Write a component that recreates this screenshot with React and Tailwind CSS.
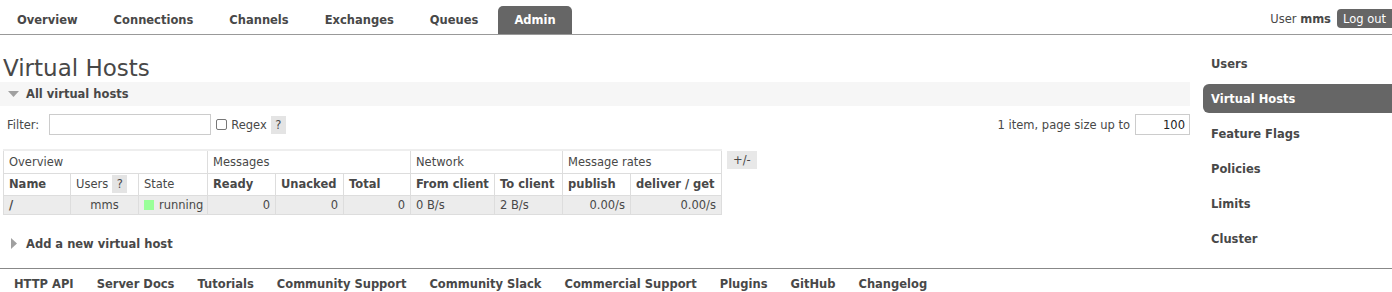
import React from "react";

const tabs = ["Overview", "Connections", "Channels", "Exchanges", "Queues", "Admin"];
const side = ["Users", "Virtual Hosts", "Feature Flags", "Policies", "Limits", "Cluster"];
const footer = [
  "HTTP API",
  "Server Docs",
  "Tutorials",
  "Community Support",
  "Community Slack",
  "Commercial Support",
  "Plugins",
  "GitHub",
  "Changelog",
];

const Help = () => (
  <span className="inline-flex items-center justify-center w-[15px] h-[18px] bg-[#e4e4e4] text-[#484848] ml-[4px]">?</span>
);

const App = () => {
  return (
    <div className="w-[1392px] h-[292px] overflow-hidden bg-white text-[#484848] text-[11.5px] leading-[14px] font-['DejaVu_Sans',Verdana,sans-serif]">
      {/* Top nav */}
      <div className="flex justify-between items-end h-[35px] border-b border-[#999]">
        <ul className="flex gap-[4px] pl-px">
          {tabs.map((t) => (
            <li
              key={t}
              className={`h-[28px] px-[16px] flex items-center font-bold ${
                t === "Admin" ? "bg-[#666] text-white rounded-t-[5px]" : ""
              }`}
            >
              {t}
            </li>
          ))}
        </ul>
        <div className="flex items-center self-start mt-[9px]">
          <span>
            User <b>mms</b>
          </span>
          <span className="ml-[6px] h-[19px] px-[6px] flex items-center bg-[#666] text-white rounded-l-[4px]">Log out</span>
        </div>
      </div>

      <div className="flex">
        {/* Main column */}
        <div className="w-[1190px]">
          <h1 className="text-[23px] leading-[28px] mt-[19px] pl-[3px]">Virtual Hosts</h1>
          <div className="h-[24px] bg-[#f6f6f6] flex items-center pl-[8px] font-bold">
            <svg width="11" height="7" viewBox="0 0 11 7" className="mr-[7px]">
              <polygon points="0,0 11,0 5.5,6" fill="#a0a0a0" />
            </svg>
            All virtual hosts
          </div>

          <div className="flex items-center justify-between mt-[8px] pl-[7px]">
            <div className="flex items-center">
              <span>Filter:</span>
              <span className="ml-[10px] w-[162px] h-[21px] border border-[#ccc] bg-white" />
              <span className="ml-[5px] w-[11px] h-[11px] border border-[#777] rounded-[2px]" />
              <span className="ml-[4px]">Regex</span>
              <Help />
            </div>
            <div className="flex items-center">
              <span>1 item, page size up to</span>
              <span className="ml-[5px] w-[55px] h-[21px] border border-[#ccc] flex items-center justify-end pr-[4px] text-[#222]">100</span>
            </div>
          </div>

          <div className="flex items-start mt-[14px] pl-[3px]">
            <table className="border-collapse border-t-2 border-[#eee]">
              <thead>
                <tr className="h-[23px]">
                  <th colSpan={3} className="font-normal text-left pl-[5px] border border-[#ddd] border-t-0">Overview</th>
                  <th colSpan={3} className="font-normal text-left pl-[5px] border border-[#ddd] border-t-0">Messages</th>
                  <th colSpan={2} className="font-normal text-left pl-[5px] border border-[#ddd] border-t-0">Network</th>
                  <th colSpan={2} className="font-normal text-left pl-[5px] border border-[#ddd] border-t-0">Message rates</th>
                </tr>
                <tr className="h-[22px] text-left">
                  <th className="w-[67px] pl-[5px] border border-[#ddd]">Name</th>
                  <th className="w-[68px] pl-[5px] border border-[#ddd] font-normal">
                    <span className="flex items-center">
                      Users
                      <Help />
                    </span>
                  </th>
                  <th className="w-[69px] pl-[5px] border border-[#ddd] font-normal">State</th>
                  <th className="w-[68px] pl-[5px] border border-[#ddd]">Ready</th>
                  <th className="w-[68px] pl-[5px] border border-[#ddd]">Unacked</th>
                  <th className="w-[67px] pl-[5px] border border-[#ddd]">Total</th>
                  <th className="w-[84px] pl-[5px] border border-[#ddd]">From client</th>
                  <th className="w-[68px] pl-[5px] border border-[#ddd]">To client</th>
                  <th className="w-[68px] pl-[5px] border border-[#ddd]">publish</th>
                  <th className="w-[91px] pl-[5px] border border-[#ddd]">deliver / get</th>
                </tr>
              </thead>
              <tbody>
                <tr className="h-[19px] bg-[#ececec]">
                  <td className="pl-[5px] font-black border border-[#ddd]">/</td>
                  <td className="text-center border border-[#ddd]">mms</td>
                  <td className="pl-[5px] border border-[#ddd]">
                    <span className="flex items-center">
                      <span className="w-[10px] h-[10px] bg-[#99ff99] mr-[5px]" />
                      running
                    </span>
                  </td>
                  <td className="text-right pr-[5px] border border-[#ddd]">0</td>
                  <td className="text-right pr-[5px] border border-[#ddd]">0</td>
                  <td className="text-right pr-[5px] border border-[#ddd]">0</td>
                  <td className="pl-[5px] border border-[#ddd]">0 B/s</td>
                  <td className="pl-[5px] border border-[#ddd]">2 B/s</td>
                  <td className="text-right pr-[5px] border border-[#ddd]">0.00/s</td>
                  <td className="text-right pr-[5px] border border-[#ddd]">0.00/s</td>
                </tr>
              </tbody>
            </table>
            <span className="ml-[5px] mt-[2px] h-[18px] px-[6px] flex items-center bg-[#e8e8e8]">+/-</span>
          </div>

          <div className="flex items-center mt-[22px] pl-[11px] font-bold">
            <svg width="7" height="11" viewBox="0 0 7 11" className="mr-[8px]">
              <polygon points="0,0 6,5.5 0,11" fill="#a0a0a0" />
            </svg>
            Add a new virtual host
          </div>
        </div>

        {/* Side menu */}
        <ul className="ml-[13px] flex-1 mt-[14px] flex flex-col gap-[6px] font-bold">
          {side.map((s) => (
            <li
              key={s}
              className={`h-[29px] pl-[8px] flex items-center ${
                s === "Virtual Hosts" ? "bg-[#666] text-white rounded-l-[6px]" : ""
              }`}
            >
              {s}
            </li>
          ))}
        </ul>
      </div>

      {/* Footer */}
      <div className="mt-[15px] border-t border-[#888] flex gap-[23px] pl-[14px] pt-[8px] font-bold">
        {footer.map((f) => (
          <span key={f}>{f}</span>
        ))}
      </div>
    </div>
  );
};

export default App;
